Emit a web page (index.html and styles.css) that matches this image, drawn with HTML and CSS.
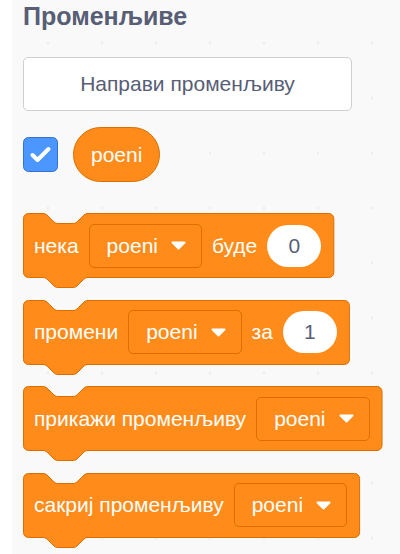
FILE: index.html
```html
<!DOCTYPE html>
<html lang="sr">
<head>
<meta charset="utf-8">
<title>Променљиве</title>
<link rel="stylesheet" href="styles.css">
</head>
<body>
<div class="strip"></div>
<div class="palette">
  <div class="title">Променљиве</div>
  <div class="make-btn">Направи променљиву</div>
  <div class="var-row">
    <svg class="checkbox" width="35" height="35" viewBox="0 0 35 35">
      <rect x="0.5" y="0.5" width="34" height="34" rx="5" fill="#4c97ff" stroke="#3373cc"/>
      <path d="M9.5 18 L14.5 23 L25.5 12" fill="none" stroke="#fff" stroke-width="4" stroke-linecap="round" stroke-linejoin="round"/>
    </svg>
    <div class="reporter">poeni</div>
  </div>

  <div class="blocks">
    <div class="block">
      <svg class="shape"><use href="#blockshape-body"/></svg>
      <span class="label">нека</span>
      <span class="dropdown">poeni<svg class="arrow" width="15" height="9" viewBox="0 0 15 9"><path d="M1.5 1.5 H13.5 L7.5 7.5 Z" fill="#fff" stroke="#fff" stroke-width="2" stroke-linejoin="round"/></svg></span>
      <span class="label">буде</span>
      <span class="num">0</span>
    </div>
    <div class="block">
      <svg class="shape"><use href="#blockshape-body"/></svg>
      <span class="label">промени</span>
      <span class="dropdown">poeni<svg class="arrow" width="15" height="9" viewBox="0 0 15 9"><path d="M1.5 1.5 H13.5 L7.5 7.5 Z" fill="#fff" stroke="#fff" stroke-width="2" stroke-linejoin="round"/></svg></span>
      <span class="label">за</span>
      <span class="num">1</span>
    </div>
    <div class="block">
      <svg class="shape"><use href="#blockshape-body"/></svg>
      <span class="label">прикажи променљиву</span>
      <span class="dropdown">poeni<svg class="arrow" width="15" height="9" viewBox="0 0 15 9"><path d="M1.5 1.5 H13.5 L7.5 7.5 Z" fill="#fff" stroke="#fff" stroke-width="2" stroke-linejoin="round"/></svg></span>
    </div>
    <div class="block">
      <svg class="shape"><use href="#blockshape-body"/></svg>
      <span class="label">сакриј променљиву</span>
      <span class="dropdown">poeni<svg class="arrow" width="15" height="9" viewBox="0 0 15 9"><path d="M1.5 1.5 H13.5 L7.5 7.5 Z" fill="#fff" stroke="#fff" stroke-width="2" stroke-linejoin="round"/></svg></span>
    </div>
  </div>
</div>

<svg class="defs" width="0" height="0">
  <defs>
    <g id="blockshape-body">
      <rect x="0.5" y="0.5" width="100%" height="64" rx="5" fill="#ff8c1a" stroke="#db6e00"/>
      <path d="M20 -1 V0.5 c2.5 0 3.75 1.25 5 2.5 l5 5 c1.25 1.25 2.5 2.5 5 2.5 h15 c2.5 0 3.75 -1.25 5 -2.5 l5 -5 c1.25 -1.25 2.5 -2.5 5 -2.5 V-1 Z" fill="#f9f9f9"/>
      <path d="M19.5 0.5 H20 c2.5 0 3.75 1.25 5 2.5 l5 5 c1.25 1.25 2.5 2.5 5 2.5 h15 c2.5 0 3.75 -1.25 5 -2.5 l5 -5 c1.25 -1.25 2.5 -2.5 5 -2.5 H65.5" fill="none" stroke="#db6e00"/>
      <rect x="20.5" y="63" width="44" height="2" fill="#ff8c1a"/>
      <path d="M20 64.5 c2.5 0 3.75 1.25 5 2.5 l5 5 c1.25 1.25 2.5 2.5 5 2.5 h15 c2.5 0 3.75 -1.25 5 -2.5 l5 -5 c1.25 -1.25 2.5 -2.5 5 -2.5" fill="#ff8c1a" stroke="#db6e00"/>
    </g>
  </defs>
</svg>
</body>
</html>
```

FILE: styles.css
```css
html, body {
  margin: 0;
  padding: 0;
  height: 100%;
}

body {
  display: flex;
  background: #ffffff;
  font-family: "Liberation Sans", Arial, Helvetica, sans-serif;
  overflow: hidden;
}

.strip {
  width: 12px;
  flex: none;
  background: #ffffff;
}

.palette {
  flex: 1;
  display: flex;
  flex-direction: column;
  align-items: flex-start;
  padding-left: 11px;
  background-color: #f9f9f9;
  background-image: radial-gradient(circle, #ededed 0, #ededed 1px, rgba(249,249,249,0) 1.6px);
  background-size: 54px 55px;
  background-position: 9px 15.5px;
}

.title {
  margin-top: 4px;
  font-size: 25px;
  line-height: 24px;
  font-weight: bold;
  color: #575e75;
}

.make-btn {
  margin-top: 29px;
  box-sizing: border-box;
  width: 329px;
  height: 54px;
  display: flex;
  align-items: center;
  justify-content: center;
  border: 1px solid #cfcfcf;
  border-radius: 5px;
  background: #ffffff;
  color: #575e75;
  font-size: 21px;
}

.var-row {
  margin-top: 16px;
  display: flex;
  align-items: center;
  gap: 15px;
}

.checkbox {
  display: block;
}

.reporter {
  box-sizing: border-box;
  height: 55px;
  padding: 0 17px;
  display: flex;
  align-items: center;
  border: 1px solid #db6e00;
  border-radius: 28px;
  background: #ff8c1a;
  color: #ffffff;
  font-size: 21px;
}

.blocks {
  margin-top: 31px;
  display: flex;
  flex-direction: column;
  align-items: flex-start;
  gap: 21.5px;
}

.block {
  position: relative;
  height: 65px;
  display: flex;
  align-items: center;
  gap: 10px;
  padding: 0 13px 0 11px;
  color: #ffffff;
  font-size: 21px;
}

.shape {
  position: absolute;
  left: 0;
  top: 0;
  width: calc(100% - 1px);
  height: 65px;
  overflow: visible;
}

.label,
.dropdown,
.num {
  position: relative;
}

.label {
  white-space: nowrap;
}

.dropdown {
  box-sizing: border-box;
  height: 44px;
  display: flex;
  align-items: center;
  gap: 13px;
  padding: 0 15px 0 17px;
  border: 1px solid #db6e00;
  border-radius: 5px;
  background: #ff8c1a;
}

.arrow {
  display: block;
}

.num {
  box-sizing: border-box;
  height: 42px;
  min-width: 54px;
  padding: 0 12px;
  display: flex;
  align-items: center;
  justify-content: center;
  border-radius: 21px;
  background: #ffffff;
  color: #575e75;
}

.defs {
  position: absolute;
  width: 0;
  height: 0;
}
```
